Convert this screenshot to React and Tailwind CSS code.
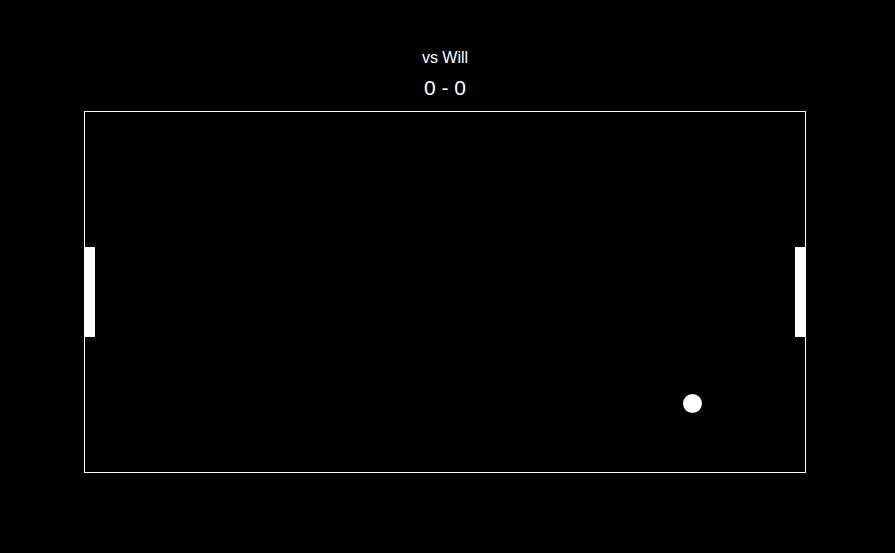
export default function App() {
  return (
    <div className="w-[895px] h-[553px] bg-black text-white overflow-hidden" style={{ fontFamily: '"Liberation Sans", Arial, sans-serif' }}>
      <div className="pl-[84px] pt-[48px]">
        <div className="w-[722px] flex flex-col items-center">
          <div className="text-[16px] leading-[20px]">vs Will</div>
          <div className="mt-[8px] text-[21px] leading-[24px]">0 - 0</div>
          <div className="mt-[11px] w-[722px] h-[362px] border border-white relative">
            <div className="absolute left-0 top-[135px] w-[10px] h-[90px] bg-white" />
            <div className="absolute right-0 top-[135px] w-[10px] h-[90px] bg-white" />
            <div className="absolute left-[598px] top-[282px] w-[19px] h-[19px] rounded-full bg-white" />
          </div>
        </div>
      </div>
    </div>
  );
}
